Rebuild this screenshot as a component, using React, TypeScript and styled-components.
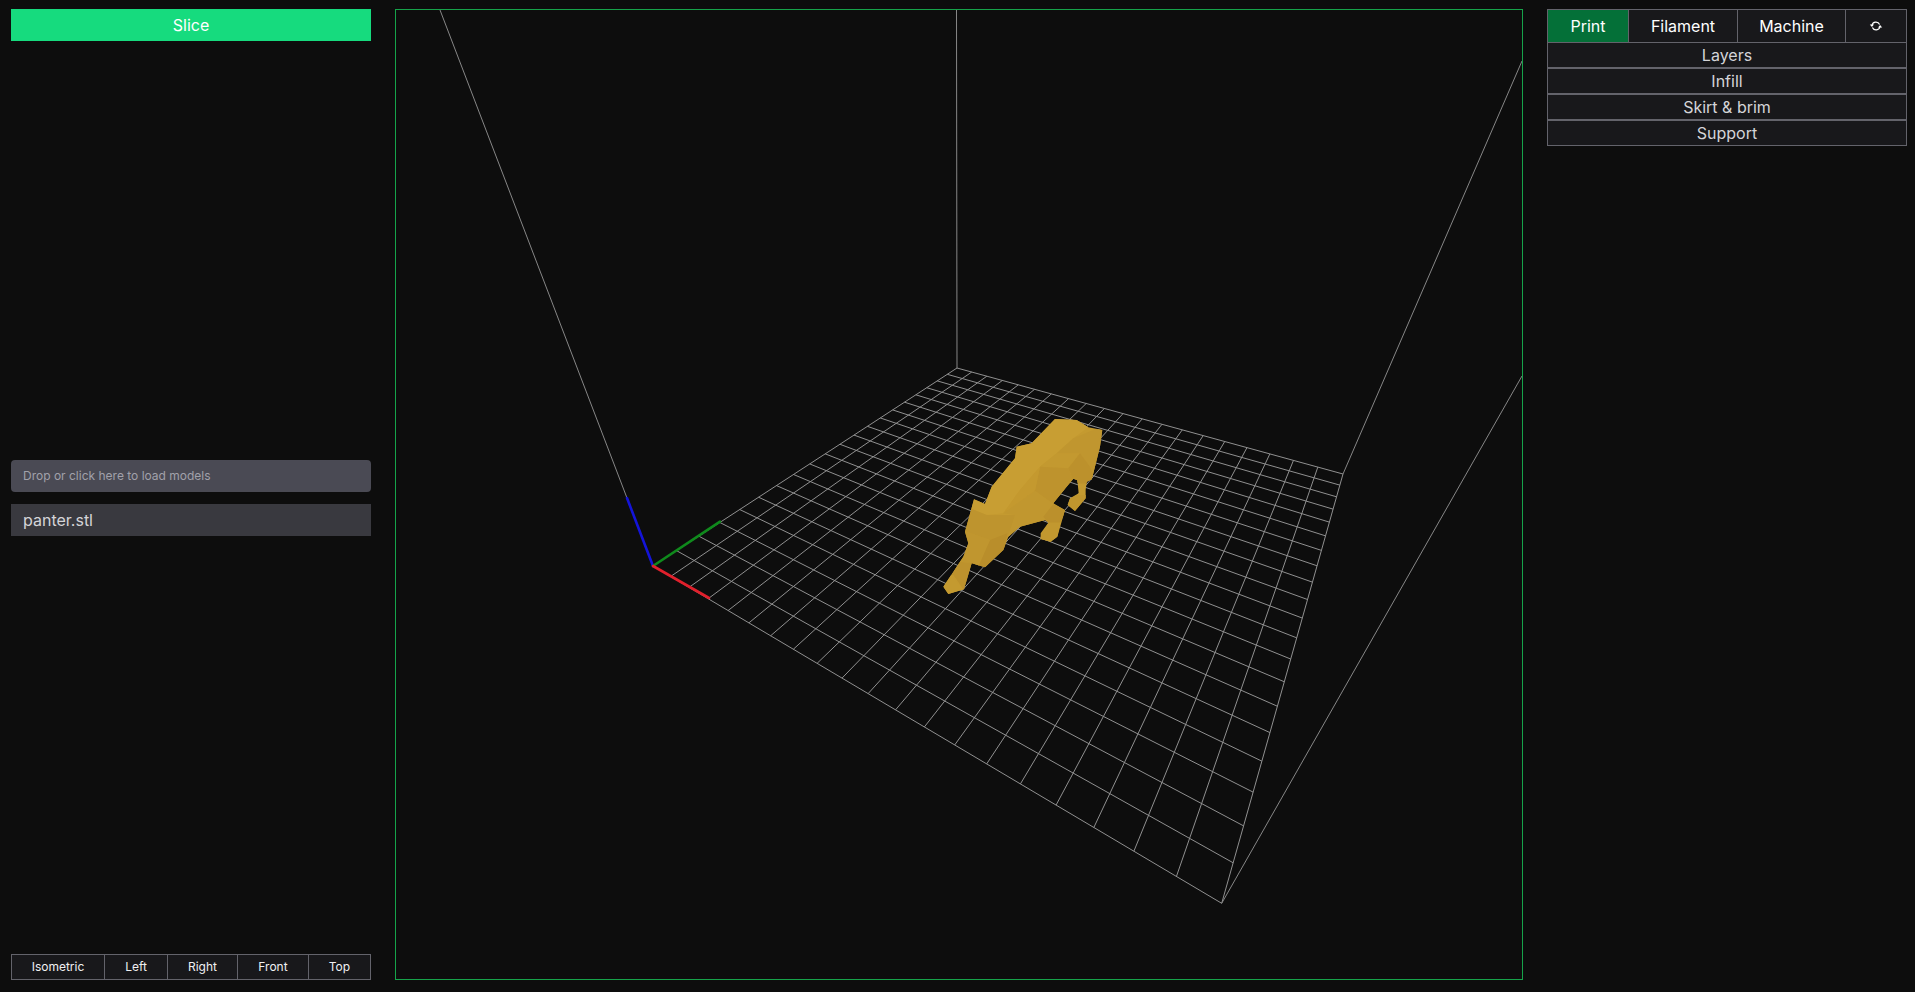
import React from "react";
import styled, { createGlobalStyle } from "styled-components";

const Global = createGlobalStyle`
  html, body { margin: 0; padding: 0; background: #0d0d0d; }
  body { font-family: Inter, "Liberation Sans", sans-serif; overflow: hidden; }
  * { box-sizing: border-box; }
`;

const Page = styled.div`
  width: 1915px;
  height: 992px;
  padding: 9px 8px 12px 11px;
  display: grid;
  grid-template-columns: 360px 1128px 360px;
  column-gap: 24px;
  background: #0d0d0d;
`;

const LeftColumn = styled.aside`
  display: flex;
  flex-direction: column;
  height: 971px;
`;

const SliceButton = styled.button`
  height: 32px;
  border: 0;
  padding: 0;
  background: #16db7e;
  color: #fff;
  font: 400 16px/24px Inter, sans-serif;
`;

const Models = styled.div`
  flex: 1;
  display: flex;
  flex-direction: column;
  justify-content: center;
  gap: 12px;
`;

const DropZone = styled.div`
  height: 32px;
  padding: 0 12px;
  display: flex;
  align-items: center;
  border-radius: 4px;
  background: #4a4a54;
  color: #a1a1aa;
  font: 400 12px/16px Inter, sans-serif;
`;

const ModelRow = styled.div`
  height: 32px;
  padding: 0 12px;
  display: flex;
  align-items: center;
  background: #39393f;
  color: #d4d4d8;
  font: 400 16px/24px Inter, sans-serif;
`;

const ViewBar = styled.div`
  height: 26px;
  display: grid;
  grid-template-columns: 93px 63px 70px 71px 1fr;
  border: 1px solid #63636b;
`;

const ViewButton = styled.button<{ $last?: boolean }>`
  border: 0;
  border-right: ${(p) => (p.$last ? "0" : "1px solid #63636b")};
  padding: 0;
  background: #18181b;
  color: #f0f0f2;
  font: 400 12px/16px Inter, sans-serif;
`;

const Viewport = styled.main`
  height: 971px;
  border: 1px solid #16a34a;
  background: #0d0d0d;
  overflow: hidden;
`;

const SceneSvg = styled.svg`
  display: block;
  width: 1126px;
  height: 969px;
`;

const RightColumn = styled.aside`
  display: flex;
  flex-direction: column;
`;

const Tabs = styled.div`
  height: 33px;
  display: grid;
  grid-template-columns: 81px 109px 108px 1fr;
  border: 1px solid #63636b;
  border-bottom: 0;
`;

const Tab = styled.button<{ $active?: boolean; $last?: boolean }>`
  border: 0;
  border-right: ${(p) => (p.$last ? "0" : "1px solid #63636b")};
  padding: 0;
  display: flex;
  align-items: center;
  justify-content: center;
  background: ${(p) => (p.$active ? "#047038" : "#18181b")};
  color: #fff;
  font: 400 16px/24px Inter, sans-serif;
`;

const Section = styled.button`
  height: 26px;
  border: 1px solid #63636b;
  padding: 0;
  background: #18181b;
  color: #d4d4d8;
  font: 400 16px/24px Inter, sans-serif;
`;

type P = [number, number];

// Projective map of the unit square on to the bed's four corners.
function makeHomography(a: P, b: P, c: P, d: P) {
  const dx1 = b[0] - c[0], dx2 = d[0] - c[0], sx = a[0] - b[0] + c[0] - d[0];
  const dy1 = b[1] - c[1], dy2 = d[1] - c[1], sy = a[1] - b[1] + c[1] - d[1];
  const det = dx1 * dy2 - dx2 * dy1;
  const g = (sx * dy2 - dx2 * sy) / det;
  const h = (dx1 * sy - sx * dy1) / det;
  const A = b[0] - a[0] + g * b[0], B = d[0] - a[0] + h * d[0], C = a[0];
  const D = b[1] - a[1] + g * b[1], E = d[1] - a[1] + h * d[1], F = a[1];
  return (u: number, v: number): P => {
    const w = g * u + h * v + 1;
    return [(A * u + B * v + C) / w, (D * u + E * v + F) / w];
  };
}

const ORIGIN: P = [653, 566];
const FRONT: P = [1221.7, 903.3];
const RIGHT: P = [1343, 474];
const BACK: P = [957, 368];
const project = makeHomography(ORIGIN, FRONT, RIGHT, BACK);
const CELLS = 20;

const gridPath = (() => {
  let d = "";
  for (let i = 0; i <= CELLS; i++) {
    const t = i / CELLS;
    const [a, b] = project(t, 0);
    const [c, e] = project(t, 1);
    const [f, g] = project(0, t);
    const [h, j] = project(1, t);
    d += `M${a} ${b}L${c} ${e}M${f} ${g}L${h} ${j}`;
  }
  return d;
})();

const facets: { fill: string; points: string }[] = [
  { fill: "#c89e33", points: "380,40 520,40 505,82 460,115 410,160 360,200 300,270 250,340 200,345 150,325 150,280 260,130" },
  { fill: "#c0962f", points: "410,160 460,115 520,90 560,80 560,140 530,260 475,250 460,240 445,205 480,160" },
  { fill: "#c39930", points: "410,160 480,160 445,205 360,200" },
  { fill: "#bc912c", points: "480,160 510,200 530,250 475,250 460,240 445,205" },
  { fill: "#be932d", points: "360,200 445,205 460,240 430,275 400,312 345,272" },
  { fill: "#c4992f", points: "360,200 345,272 250,340 300,270" },
  { fill: "#c1972f", points: "250,340 345,272 400,312 375,365 300,390 262,415 285,345" },
  { fill: "#be942e", points: "150,325 200,345 285,345 262,415 210,420 125,390" },
  { fill: "#b98e2b", points: "210,420 262,400 250,470 190,510 170,495" },
  { fill: "#c0962f", points: "125,390 210,420 175,500 158,490 115,485 135,450" },
  { fill: "#bd922d", points: "115,485 158,490 135,575 100,525 95,525" },
  { fill: "#c49a30", points: "90,520 135,575 75,590 60,562" },
  { fill: "#bb902c", points: "400,312 440,332 420,368 385,368 370,350" },
  { fill: "#c2982f", points: "385,368 420,368 410,430 350,430" },
  { fill: "#c0962e", points: "435,305 470,285 500,285 500,305 460,340" },
];

const OUTLINE =
  "70,560 100,515 130,470 145,430 135,395 162,298 195,312 215,260 285,175 290,140 335,130 405,57 470,60 505,82 547,90 540,140 520,220 515,238 500,245 497,270 497,295 465,333 443,315 450,295 476,280 472,240 460,236 440,260 400,310 435,330 412,410 392,425 362,417 362,400 385,368 375,360 300,380 265,410 250,450 195,502 155,490 132,568 85,582";

const SyncIcon = () => (
  <svg width="14" height="14" viewBox="0 0 14 14" fill="none" stroke="#fff" strokeWidth="1.2">
    <path d="M3 6.4A4 4 0 0 1 10.6 5.6" />
    <path d="M11 7.6A4 4 0 0 1 3.4 8.4" />
    <path d="M0.8 5.6H5L2.9 8Z" fill="#fff" stroke="none" />
    <path d="M13.2 8.4H9L11.1 6Z" fill="#fff" stroke="none" />
  </svg>
);

const views = ["Isometric", "Left", "Right", "Front", "Top"];
const sections = ["Layers", "Infill", "Skirt & brim", "Support"];

export default function App() {
  return (
    <Page>
      <Global />
      <LeftColumn>
        <SliceButton>Slice</SliceButton>
        <Models>
          <DropZone>Drop or click here to load models</DropZone>
          <ModelRow>panter.stl</ModelRow>
        </Models>
        <ViewBar>
          {views.map((v, i) => (
            <ViewButton key={v} $last={i === views.length - 1}>
              {v}
            </ViewButton>
          ))}
        </ViewBar>
      </LeftColumn>

      <Viewport>
        <SceneSvg viewBox="396 10 1126 969">
          <g fill="none" strokeWidth="1">
            <path d={gridPath} stroke="#909090" />
            <path d="M627 498L440 10M957 368L956.5 10M1343 474L1522 61M1221.7 903.3L1522 376" stroke="#878787" />
          </g>
          <g strokeWidth="2.6" strokeLinecap="round">
            <line x1="653" y1="566" x2="627" y2="498" stroke="#1414d8" />
            <line x1="653" y1="566" x2="720" y2="521.7" stroke="#0f8a1c" />
            <line x1="653" y1="566" x2="709" y2="598" stroke="#e0202c" />
          </g>
          <g transform="translate(920 400) scale(0.33333)">
            <defs>
              <clipPath id="panther-silhouette">
                <polygon points={OUTLINE} />
              </clipPath>
            </defs>
            <polygon points={OUTLINE} fill="#c49a30" />
            <g clipPath="url(#panther-silhouette)">
              {facets.map((f) => (
                <polygon key={f.points} points={f.points} fill={f.fill} />
              ))}
            </g>
          </g>
        </SceneSvg>
      </Viewport>

      <RightColumn>
        <Tabs>
          <Tab $active>Print</Tab>
          <Tab>Filament</Tab>
          <Tab>Machine</Tab>
          <Tab $last aria-label="Reset">
            <SyncIcon />
          </Tab>
        </Tabs>
        {sections.map((s) => (
          <Section key={s}>{s}</Section>
        ))}
      </RightColumn>
    </Page>
  );
}
